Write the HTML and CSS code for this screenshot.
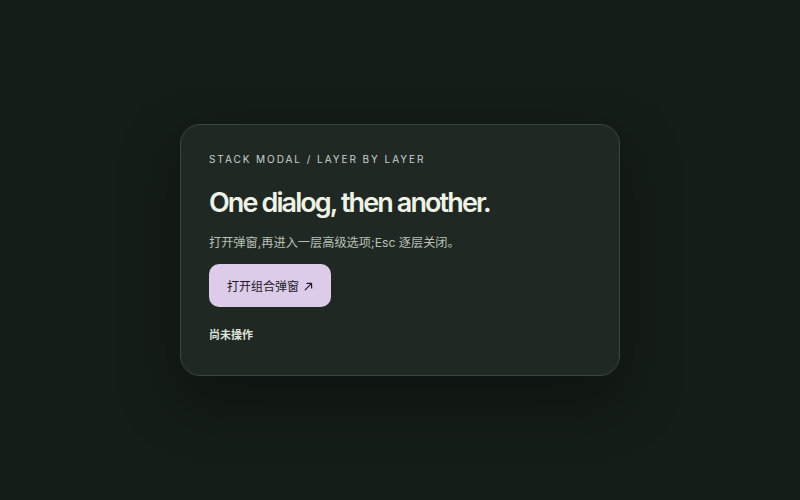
FILE: index.html
```html
<!DOCTYPE html>
<html lang="zh">
<head>
<meta charset="utf-8">
<link rel="stylesheet" href="styles.css">
</head>
<body>
<main class="stage">
  <section class="card">
    <p class="eyebrow">STACK MODAL / LAYER BY LAYER</p>
    <h1 class="title">One dialog, then another.</h1>
    <p class="desc">打开弹窗,再进入一层高级选项;Esc 逐层关闭。</p>
    <button class="open-btn" type="button">打开组合弹窗<svg class="arrow" width="9" height="9" viewBox="0 0 9 9" aria-hidden="true"><path d="M1.2 7.8 L7.6 1.4 M3 1.4 H7.6 V6" fill="none" stroke="#1e1a24" stroke-width="1.2" stroke-linecap="round" stroke-linejoin="round"/></svg></button>
    <p class="status">尚未操作</p>
  </section>
</main>
</body>
</html>
```
FILE: styles.css
```css
html, body {
  margin: 0;
  height: 100%;
}
body {
  background: #151d18;
  font-family: Inter, "Noto Sans CJK SC", sans-serif;
}
.stage {
  height: 100%;
  display: flex;
  align-items: center;
  justify-content: center;
}
.card {
  box-sizing: border-box;
  width: 440px;
  height: 252px;
  background: #202823;
  border: 1px solid #3b453e;
  border-radius: 20px;
  padding: 28px 28px 0;
  box-shadow: 0 24px 60px rgba(0, 0, 0, 0.35);
}
.eyebrow {
  margin: 0;
  font-size: 10px;
  line-height: 13px;
  letter-spacing: 1.95px;
  color: #ccd0cc;
}
.title {
  margin: 21px 0 0;
  font-size: 27px;
  line-height: 32px;
  font-weight: 600;
  letter-spacing: -1.9px;
  color: #eef3e6;
}
.desc {
  margin: 15px 0 0;
  font-size: 12.2px;
  line-height: 18px;
  color: #b9c0b6;
}
.open-btn {
  display: flex;
  align-items: center;
  gap: 5px;
  margin-top: 12px;
  height: 43px;
  padding: 0 18px;
  border: none;
  border-radius: 10px;
  background: #dccbe9;
  color: #1e1a24;
  font-family: Inter, "Noto Sans CJK SC", sans-serif;
  font-size: 12px;
}
.arrow {
  display: block;
  margin-top: 1px;
}
.status {
  margin: 20px 0 0;
  font-size: 11px;
  line-height: 16px;
  font-weight: 600;
  color: #dfe4da;
}
```
